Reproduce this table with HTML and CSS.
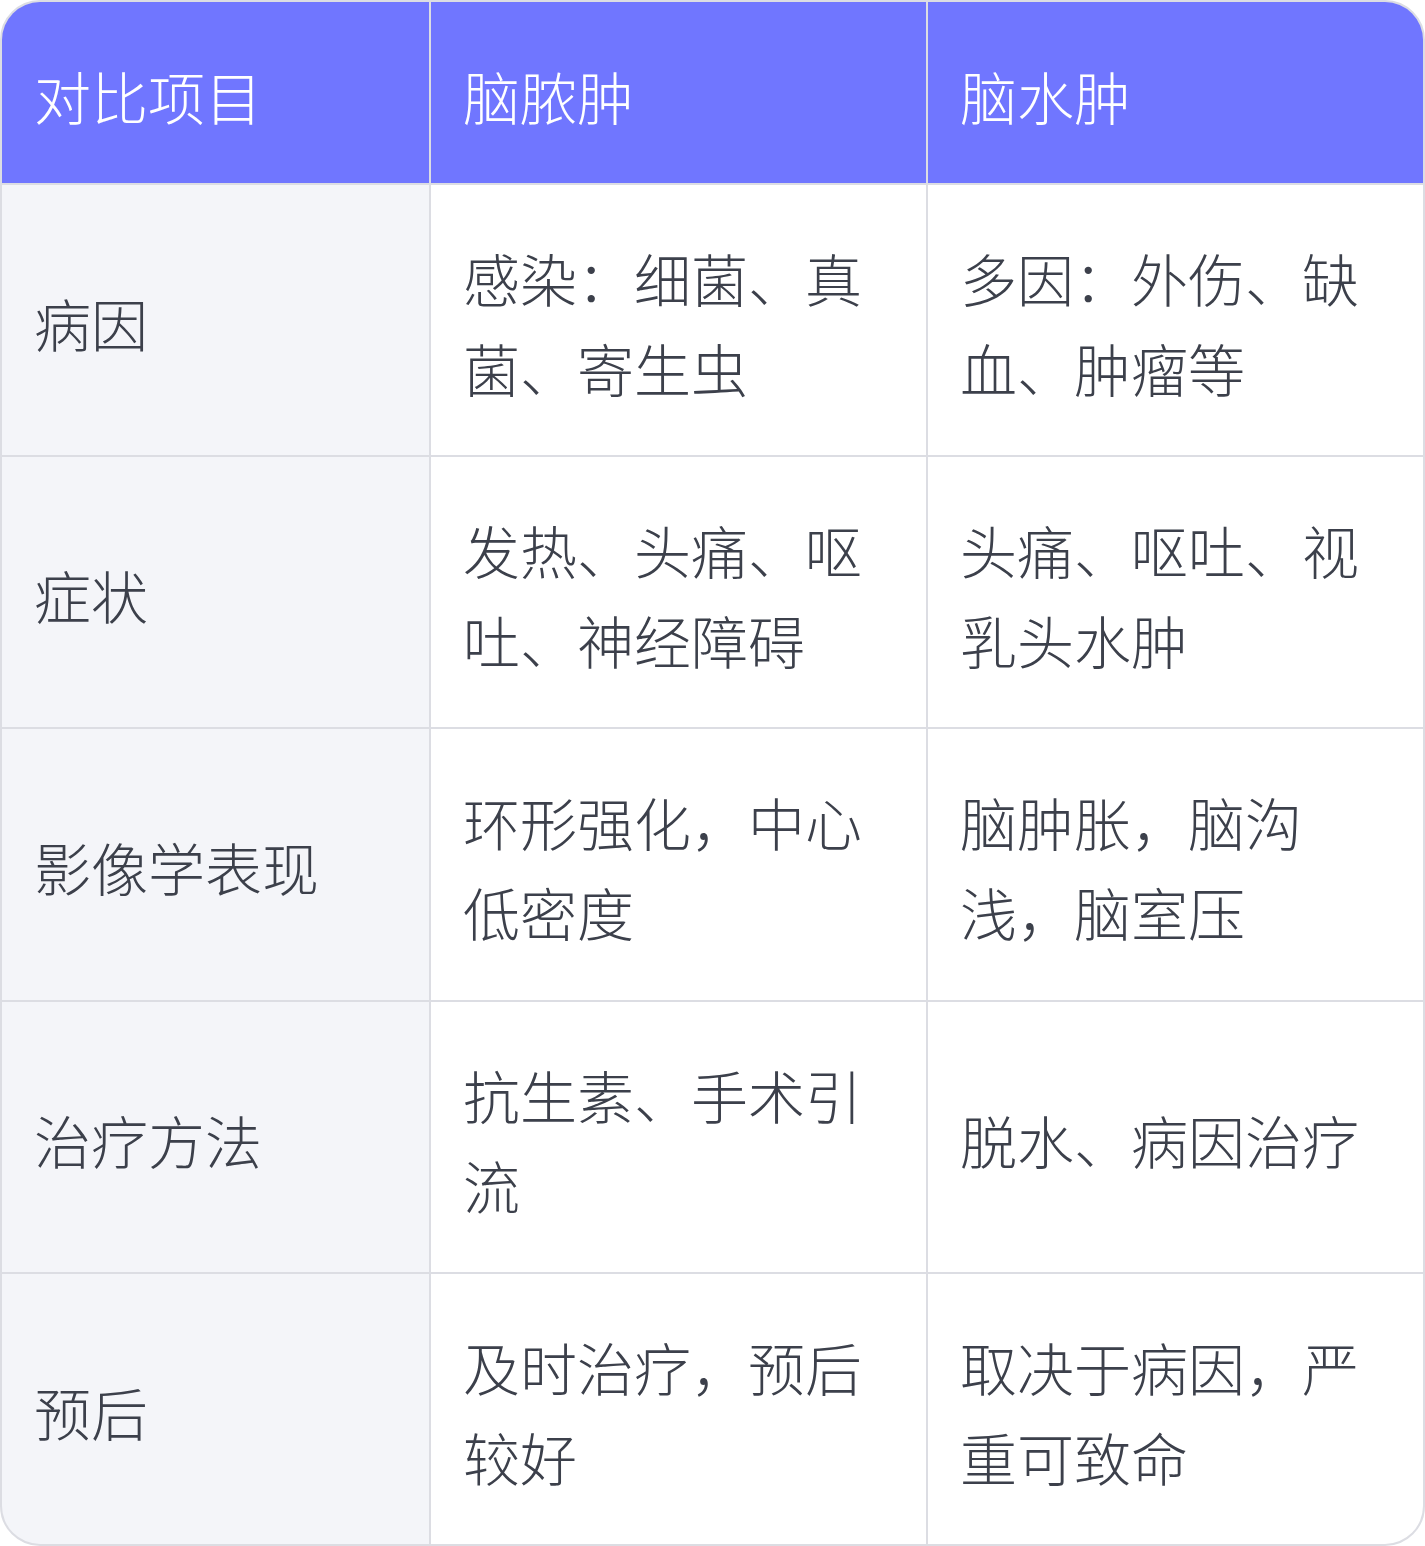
FILE: index.html
```html
<!DOCTYPE html>
<html lang="zh-CN">
<head>
<meta charset="utf-8">
<link rel="stylesheet" href="styles.css">
</head>
<body>
<div class="table">
  <div class="cell head">对比项目</div>
  <div class="cell head">脑脓肿</div>
  <div class="cell head">脑水肿</div>

  <div class="cell label">病因</div>
  <div class="cell">感染：细菌、真菌、寄生虫</div>
  <div class="cell">多因：外伤、缺血、肿瘤等</div>

  <div class="cell label">症状</div>
  <div class="cell">发热、头痛、呕吐、神经障碍</div>
  <div class="cell">头痛、呕吐、视乳头水肿</div>

  <div class="cell label">影像学表现</div>
  <div class="cell">环形强化，中心低密度</div>
  <div class="cell">脑肿胀，脑沟浅，脑室压</div>

  <div class="cell label">治疗方法</div>
  <div class="cell">抗生素、手术引流</div>
  <div class="cell">脱水、病因治疗</div>

  <div class="cell label">预后</div>
  <div class="cell">及时治疗，预后较好</div>
  <div class="cell">取决于病因，严重可致命</div>
</div>
</body>
</html>
```
FILE: styles.css
```css
* { box-sizing: border-box; }
html, body { margin: 0; padding: 0; background: #ffffff; }
body {
  font-family: "Noto Sans CJK SC", "Noto Sans", sans-serif;
  font-weight: 300;
}
.table {
  width: 1425px;
  height: 1546px;
  border: 2px solid #dcdde3;
  border-radius: 40px;
  overflow: hidden;
  background: #dcdde3;
  display: grid;
  grid-template-columns: 427px 495px 1fr;
  grid-template-rows: 181px repeat(5, 1fr);
  gap: 2px;
}
.cell {
  background: #ffffff;
  color: #3c404b;
  font-size: 57px;
  line-height: 90px;
  padding: 4px 32px 0 32px;
  display: flex;
  align-items: center;
}
.head {
  background: #7076ff;
  color: #ffffff;
}
.label {
  background: #f4f5f9;
}
```
